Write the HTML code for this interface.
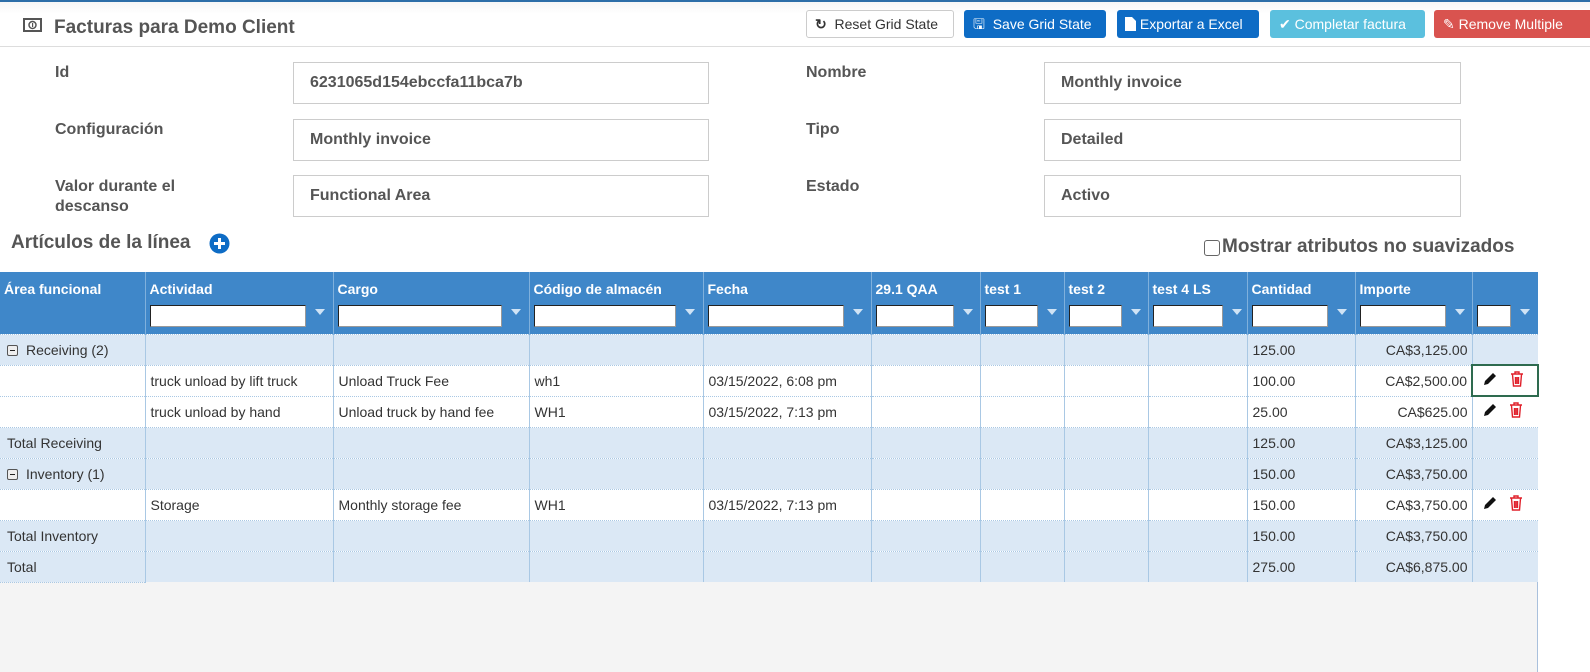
<!DOCTYPE html>
<html><head><meta charset="utf-8"><style>
*{box-sizing:border-box;margin:0;padding:0}
body{width:1590px;height:672px;overflow:hidden;background:#fff;font-family:"Liberation Sans",Arial,sans-serif;position:relative;color:#555}
.abs{position:absolute}
.topline{left:0;top:0;width:1590px;height:2px;background:#2d6ea8}
.hdr{left:0;top:2px;width:1590px;height:45px;border-bottom:1px solid #ddd;background:linear-gradient(#f6f6f6,#fff 12px)}
.title{left:54px;top:17px;font-size:19px;font-weight:bold;color:#555}
.btn{top:10px;height:28px;border-radius:3px;font-size:14px;line-height:26px;padding:0 8px;white-space:nowrap;overflow:hidden;border:1px solid transparent}
.lbl{font-size:16px;font-weight:bold;color:#555;line-height:20px}
.inp{height:42px;border:1px solid #ccc;font-size:16px;font-weight:bold;color:#555;padding:10px 16px;line-height:20px}
table{position:absolute;left:0;top:272px;border-collapse:collapse;table-layout:fixed;width:1538px}
th{background:#3f87c9;color:#fff;font-size:14px;text-align:left;vertical-align:top;padding:9px 4px 0 4px;height:62px;border-left:1px solid #7fb0dc;font-weight:bold}
th .f{position:absolute}
td{font-size:14px;color:#333;height:31px;padding:0 4px 0 5px;border-left:1px solid #a9c8e4;border-top:1px dotted #a9c8e4;white-space:nowrap;overflow:hidden}
tr.g td{background:#dbe8f5}
tr.w td{background:#fff}
.r{text-align:right}
.fi{display:inline-block;height:22px;background:#fff;border:1px solid #222;border-right-color:#999;border-bottom-color:#999;vertical-align:middle}
.fun{display:inline-block;width:0;height:0;border-left:5px solid transparent;border-right:5px solid transparent;border-top:6px solid #cfe3f5;vertical-align:middle;margin-left:9px;position:relative}
.minus{display:inline-block;width:11px;height:11px;border:1px solid #555;border-radius:2px;position:relative;vertical-align:-1px;margin:0 8px 0 2px;background:#eee}
.minus:after{content:"";position:absolute;left:2px;top:4px;width:5px;height:1px;background:#222}
</style></head><body>
<div class="abs topline"></div>
<div class="abs hdr"></div>
<svg class="abs" style="left:23px;top:18px" width="19" height="14" viewBox="0 0 19 14"><rect x="1" y="1" width="17" height="12" fill="none" stroke="#555" stroke-width="2"/><circle cx="9.5" cy="7" r="3.5" fill="none" stroke="#555" stroke-width="1.5"/><rect x="9" y="5" width="1.2" height="4" fill="#555"/></svg>
<div class="abs title">Facturas para Demo Client</div>

<div class="abs btn" style="left:806px;width:148px;border-color:#ccc;color:#333;background:#fff"><span style="font-weight:bold">&#x21bb;</span>&nbsp; Reset Grid State</div>
<div class="abs btn" style="left:964px;width:142px;background:#0e6cc5;color:#fff">&#x1f5ab;&nbsp; Save Grid State</div>
<div class="abs btn" style="left:1117px;width:142px;background:#0e6cc5;color:#fff;padding-left:6px"><svg width="12" height="14" style="vertical-align:-2px"><path d="M1 0h7l4 4v10H1z" fill="#fff"/></svg> Exportar a Excel</div>
<div class="abs btn" style="left:1270px;width:155px;background:#5bc0de;color:#fff">&#10004; Completar factura</div>
<div class="abs btn" style="left:1434px;width:160px;background:#d9534f;color:#fff">&#x270e; Remove Multiple</div>

<div class="abs lbl" style="left:55px;top:63px">Id</div>
<div class="abs inp" style="left:293px;top:62px;width:416px">6231065d154ebccfa11bca7b</div>
<div class="abs lbl" style="left:55px;top:120px">Configuración</div>
<div class="abs inp" style="left:293px;top:119px;width:416px">Monthly invoice</div>
<div class="abs lbl" style="left:55px;top:177px">Valor durante el<br>descanso</div>
<div class="abs inp" style="left:293px;top:175px;width:416px">Functional Area</div>
<div class="abs lbl" style="left:806px;top:63px">Nombre</div>
<div class="abs inp" style="left:1044px;top:62px;width:417px">Monthly invoice</div>
<div class="abs lbl" style="left:806px;top:120px">Tipo</div>
<div class="abs inp" style="left:1044px;top:119px;width:417px">Detailed</div>
<div class="abs lbl" style="left:806px;top:177px">Estado</div>
<div class="abs inp" style="left:1044px;top:175px;width:417px">Activo</div>

<div class="abs" style="left:11px;top:232px;font-size:19px;font-weight:bold;color:#555">Artículos de la línea</div>
<svg class="abs" style="left:209px;top:233px" width="21" height="21"><circle cx="10.5" cy="10.5" r="10" fill="#0e6cc5"/><path d="M10.5 5v11M5 10.5h11" stroke="#fff" stroke-width="3"/></svg>
<div class="abs" style="left:1204px;top:236px;font-size:19px;font-weight:bold;color:#555"><span style="display:inline-block;width:16px;height:16px;border:1px solid #666;border-radius:3px;vertical-align:-4px;margin-right:2px"></span>Mostrar atributos no suavizados</div>

<div class="abs" style="left:0;top:580px;width:1537px;height:92px;background:#f4f4f4"></div>
<div class="abs" style="left:1537px;top:272px;width:1px;height:400px;background:#a9c0dc"></div>

<table>
<colgroup><col style="width:145px"><col style="width:188px"><col style="width:196px"><col style="width:174px"><col style="width:168px"><col style="width:109px"><col style="width:84px"><col style="width:84px"><col style="width:99px"><col style="width:108px"><col style="width:117px"><col style="width:66px"></colgroup>
<tr>
<th style="border-left:none">Área funcional</th>
<th>Actividad<br><span class="fi" style="width:156px;margin-top:8px"></span><span class="fun"></span></th>
<th>Cargo<br><span class="fi" style="width:164px;margin-top:8px"></span><span class="fun"></span></th>
<th>Código de almacén<br><span class="fi" style="width:142px;margin-top:8px"></span><span class="fun"></span></th>
<th>Fecha<br><span class="fi" style="width:136px;margin-top:8px"></span><span class="fun"></span></th>
<th>29.1 QAA<br><span class="fi" style="width:78px;margin-top:8px"></span><span class="fun"></span></th>
<th>test 1<br><span class="fi" style="width:53px;margin-top:8px"></span><span class="fun"></span></th>
<th>test 2<br><span class="fi" style="width:53px;margin-top:8px"></span><span class="fun"></span></th>
<th>test 4 LS<br><span class="fi" style="width:70px;margin-top:8px"></span><span class="fun"></span></th>
<th>Cantidad<br><span class="fi" style="width:76px;margin-top:8px"></span><span class="fun"></span></th>
<th>Importe<br><span class="fi" style="width:86px;margin-top:8px"></span><span class="fun"></span></th>
<th><br><span class="fi" style="width:34px;margin-top:8px"></span><span class="fun"></span></th>
</tr>
<tr class="g"><td style="border-left:none"><span class="minus"></span>Receiving (2)</td><td></td><td></td><td></td><td></td><td></td><td></td><td></td><td></td><td>125.00</td><td class="r">CA$3,125.00</td><td></td></tr>
<tr class="w"><td style="border-left:none"></td><td>truck unload by lift truck</td><td>Unload Truck Fee</td><td>wh1</td><td>03/15/2022, 6:08 pm</td><td></td><td></td><td></td><td></td><td>100.00</td><td class="r">CA$2,500.00</td><td style="border:2px solid #2e6b4f;padding-left:9px"><svg width="16" height="16" viewBox="0 0 16 16"><path d="M2 14l1-4 8-8 3 3-8 8z" fill="#111"/></svg>&nbsp;&nbsp;&nbsp;<svg width="14" height="16" viewBox="0 0 14 16"><path d="M1 3h12M5 3V1h4v2M2.5 3.5l1 11.5h7l1-11.5M5.5 6v7M7 6v7M8.5 6v7" fill="none" stroke="#e0202a" stroke-width="1.4"/></svg></td></tr>
<tr class="w"><td style="border-left:none"></td><td>truck unload by hand</td><td>Unload truck by hand fee</td><td>WH1</td><td>03/15/2022, 7:13 pm</td><td></td><td></td><td></td><td></td><td>25.00</td><td class="r">CA$625.00</td><td style="padding-left:9px"><svg width="16" height="16" viewBox="0 0 16 16"><path d="M2 14l1-4 8-8 3 3-8 8z" fill="#111"/></svg>&nbsp;&nbsp;&nbsp;<svg width="14" height="16" viewBox="0 0 14 16"><path d="M1 3h12M5 3V1h4v2M2.5 3.5l1 11.5h7l1-11.5M5.5 6v7M7 6v7M8.5 6v7" fill="none" stroke="#e0202a" stroke-width="1.4"/></svg></td></tr>
<tr class="g"><td style="border-left:none;padding-left:7px">Total Receiving</td><td></td><td></td><td></td><td></td><td></td><td></td><td></td><td></td><td>125.00</td><td class="r">CA$3,125.00</td><td></td></tr>
<tr class="g"><td style="border-left:none"><span class="minus"></span>Inventory (1)</td><td></td><td></td><td></td><td></td><td></td><td></td><td></td><td></td><td>150.00</td><td class="r">CA$3,750.00</td><td></td></tr>
<tr class="w"><td style="border-left:none"></td><td>Storage</td><td>Monthly storage fee</td><td>WH1</td><td>03/15/2022, 7:13 pm</td><td></td><td></td><td></td><td></td><td>150.00</td><td class="r">CA$3,750.00</td><td style="padding-left:9px"><svg width="16" height="16" viewBox="0 0 16 16"><path d="M2 14l1-4 8-8 3 3-8 8z" fill="#111"/></svg>&nbsp;&nbsp;&nbsp;<svg width="14" height="16" viewBox="0 0 14 16"><path d="M1 3h12M5 3V1h4v2M2.5 3.5l1 11.5h7l1-11.5M5.5 6v7M7 6v7M8.5 6v7" fill="none" stroke="#e0202a" stroke-width="1.4"/></svg></td></tr>
<tr class="g"><td style="border-left:none;padding-left:7px">Total Inventory</td><td></td><td></td><td></td><td></td><td></td><td></td><td></td><td></td><td>150.00</td><td class="r">CA$3,750.00</td><td></td></tr>
<tr class="g"><td style="border-left:none;padding-left:7px;border-bottom:1px dotted #a9c8e4">Total</td><td></td><td></td><td></td><td></td><td></td><td></td><td></td><td></td><td>275.00</td><td class="r">CA$6,875.00</td><td></td></tr>
</table>
</body></html>
